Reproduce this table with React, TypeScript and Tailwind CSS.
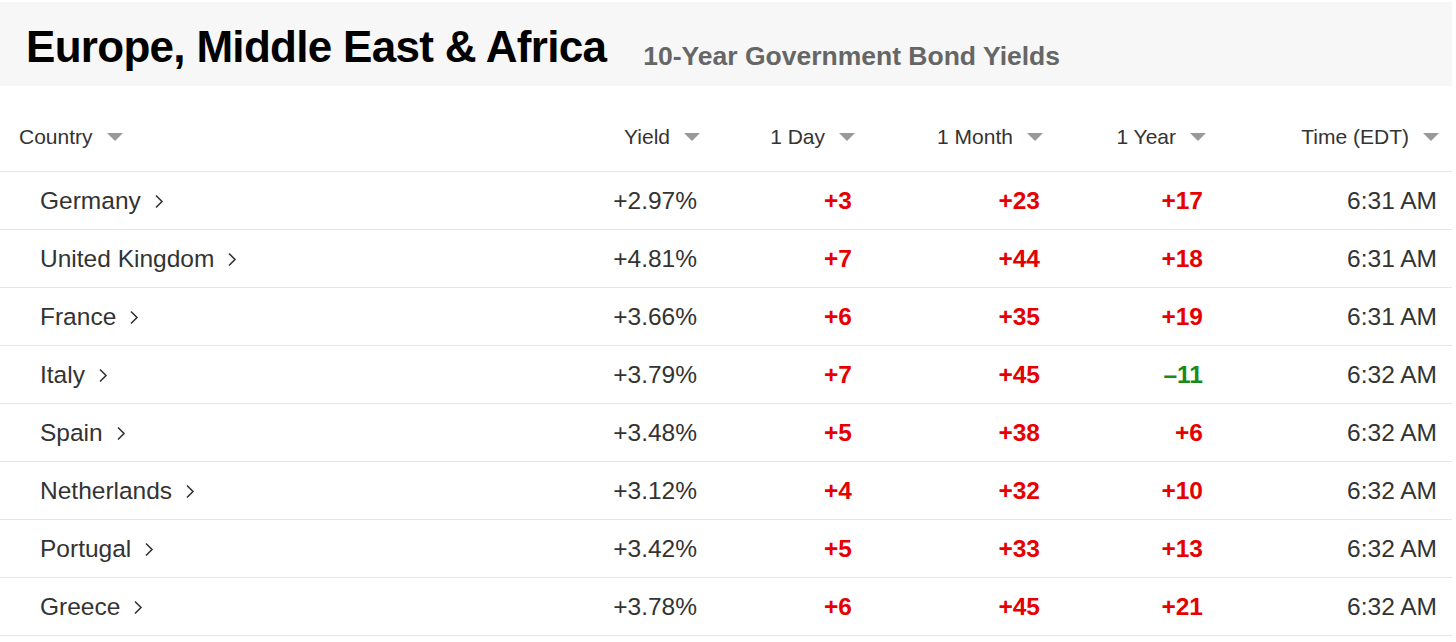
import clsx from "clsx";

type Row = {
  country: string;
  yieldPct: string;
  day: string;
  month: string;
  year: string;
  time: string;
};

const rows: Row[] = [
  { country: "Germany", yieldPct: "+2.97%", day: "+3", month: "+23", year: "+17", time: "6:31 AM" },
  { country: "United Kingdom", yieldPct: "+4.81%", day: "+7", month: "+44", year: "+18", time: "6:31 AM" },
  { country: "France", yieldPct: "+3.66%", day: "+6", month: "+35", year: "+19", time: "6:31 AM" },
  { country: "Italy", yieldPct: "+3.79%", day: "+7", month: "+45", year: "–11", time: "6:32 AM" },
  { country: "Spain", yieldPct: "+3.48%", day: "+5", month: "+38", year: "+6", time: "6:32 AM" },
  { country: "Netherlands", yieldPct: "+3.12%", day: "+4", month: "+32", year: "+10", time: "6:32 AM" },
  { country: "Portugal", yieldPct: "+3.42%", day: "+5", month: "+33", year: "+13", time: "6:32 AM" },
  { country: "Greece", yieldPct: "+3.78%", day: "+6", month: "+45", year: "+21", time: "6:32 AM" },
];

const cols = "grid grid-cols-[560px_140px_155px_188px_163px_246px]";

function SortArrow() {
  return (
    <svg width="16" height="8" viewBox="0 0 16 8" className="shrink-0">
      <path d="M0 0 H16 L8 8 Z" fill="#999" />
    </svg>
  );
}

function Chevron() {
  return (
    <svg width="10" height="15" viewBox="0 0 10 15" className="shrink-0">
      <path d="M2 1.5 L8 7.5 L2 13.5" fill="none" stroke="#333" strokeWidth="1.6" />
    </svg>
  );
}

function HeadCell({ label, left, last }: { label: string; left?: boolean; last?: boolean }) {
  return (
    <div
      className={clsx(
        "flex items-center gap-[14px]",
        left ? "justify-start pl-[19px]" : "justify-end",
        last && "pr-[13px]"
      )}
    >
      <span>{label}</span>
      <SortArrow />
    </div>
  );
}

function Change({ value }: { value: string }) {
  const down = value.startsWith("–") || value.startsWith("-");
  return (
    <div
      className={clsx(
        "flex items-center justify-end pr-[3px] font-bold",
        down ? "text-[#1a8a1a]" : "text-[#e60000]"
      )}
    >
      {value}
    </div>
  );
}

export default function App() {
  return (
    <div className="w-[1452px] bg-white pt-[2px] font-['Liberation_Sans',Arial,sans-serif] text-[#333]">
      <div className="flex h-[84px] items-start bg-[#f7f7f7] pl-[26px] pt-[23px]">
        <h1 className="text-[44px] font-bold leading-none tracking-[-0.7px] text-black">
          Europe, Middle East &amp; Africa
        </h1>
        <h2 className="ml-[37px] mt-[18px] text-[26.5px] font-bold leading-none text-[#666]">
          10-Year Government Bond Yields
        </h2>
      </div>

      <div className={clsx(cols, "h-[86px] border-b border-[#e6e6e6] pt-[17px] text-[21px]")}>
        <HeadCell label="Country" left />
        <HeadCell label="Yield" />
        <HeadCell label="1 Day" />
        <HeadCell label="1 Month" />
        <HeadCell label="1 Year" />
        <HeadCell label="Time (EDT)" last />
      </div>

      {rows.map((r) => (
        <div
          key={r.country}
          className={clsx(cols, "h-[58px] border-b border-[#e6e6e6] pt-[2px] text-[24.5px]")}
        >
          <div className="flex items-center gap-[13px] pl-[40px]">
            <span>{r.country}</span>
            <Chevron />
          </div>
          <div className="flex items-center justify-end pr-[3px]">{r.yieldPct}</div>
          <Change value={r.day} />
          <Change value={r.month} />
          <Change value={r.year} />
          <div className="flex items-center justify-end pr-[15px]">{r.time}</div>
        </div>
      ))}
    </div>
  );
}
